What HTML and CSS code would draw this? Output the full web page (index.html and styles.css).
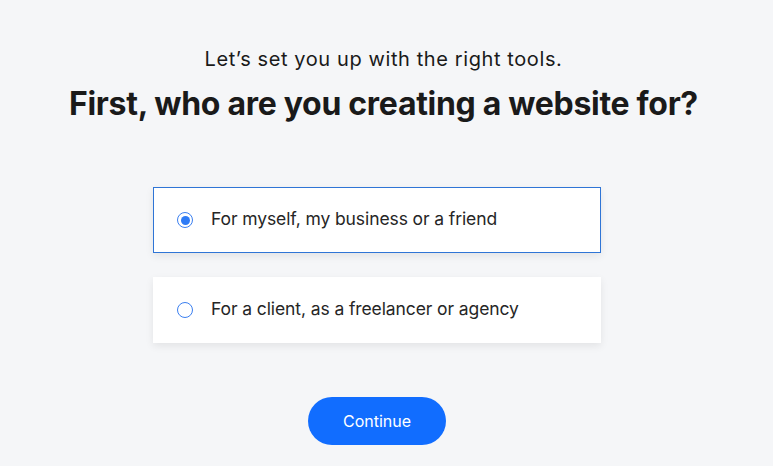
FILE: index.html
```html
<!DOCTYPE html>
<html>
<head>
<meta charset="utf-8">
<link rel="stylesheet" href="styles.css">
</head>
<body>
<main class="page">
  <p class="subtitle">Let’s set you up with the right tools.</p>
  <h1 class="title">First, who are you creating a website for?</h1>
  <div class="options">
    <label class="option selected">
      <span class="radio"><span class="dot"></span></span>
      <span class="label">For myself, my business or a friend</span>
    </label>
    <label class="option">
      <span class="radio"></span>
      <span class="label">For a client, as a freelancer or agency</span>
    </label>
  </div>
  <button class="continue">Continue</button>
</main>
</body>
</html>
```
FILE: styles.css
```css
html, body {
  margin: 0;
  padding: 0;
  background: #f5f6f8;
}
body {
  font-family: Inter, "Noto Sans", sans-serif;
  color: #1a1a1a;
}
.page {
  display: flex;
  flex-direction: column;
  align-items: center;
  padding-top: 47px;
  padding-right: 6px;
}
.subtitle {
  margin: 0;
  font-size: 20px;
  line-height: 24px;
  font-weight: 400;
  letter-spacing: 0.6px;
}
.title {
  margin: 13px 0 0;
  font-size: 32px;
  line-height: 40px;
  font-weight: 700;
  letter-spacing: -0.3px;
}
.options {
  margin-top: 63px;
  margin-right: 13px;
  display: flex;
  flex-direction: column;
  gap: 24px;
  width: 448px;
}
.option {
  box-sizing: border-box;
  height: 66px;
  background: #fff;
  display: flex;
  align-items: center;
  padding-left: 23px;
  border: 1px solid transparent;
  box-shadow: 0 3px 8px rgba(0, 0, 0, 0.08);
}
.option.selected {
  border-color: #2f75d6;
}
.radio {
  box-sizing: border-box;
  width: 16px;
  height: 16px;
  border: 1.5px solid #3b7ff0;
  border-radius: 50%;
  display: flex;
  align-items: center;
  justify-content: center;
  margin-right: 18px;
}
.dot {
  width: 9px;
  height: 9px;
  border-radius: 50%;
  background: #2e7bf6;
}
.label {
  font-size: 17.5px;
  color: #262626;
  letter-spacing: -0.1px;
  position: relative;
  top: -2px;
}
.continue {
  margin-top: 54px;
  margin-right: 13px;
  width: 138px;
  height: 48px;
  border: none;
  border-radius: 24px;
  background: #116dff;
  color: #fff;
  font-family: Inter, "Noto Sans", sans-serif;
  font-size: 16px;
}
```
